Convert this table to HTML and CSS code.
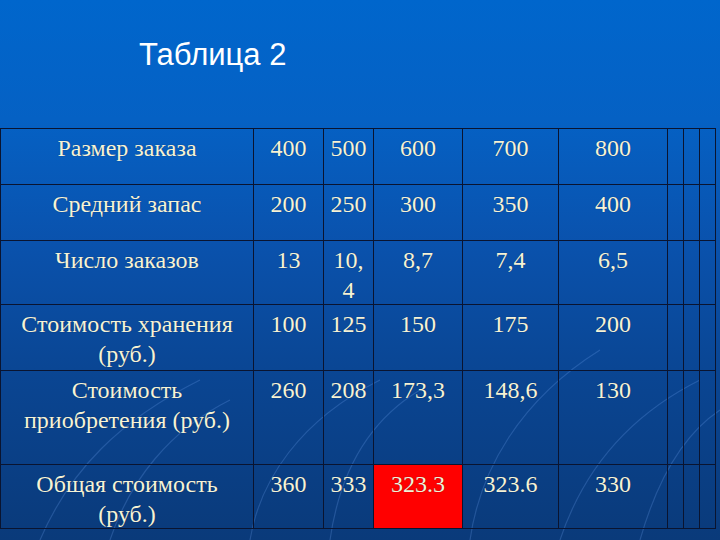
FILE: index.html
```html
<!DOCTYPE html>
<html lang="ru">
<head>
<meta charset="utf-8">
<title>Таблица 2</title>
<link rel="stylesheet" href="styles.css">
</head>
<body>
<div class="slide">
  <div class="header"><h1 class="title">Таблица 2</h1></div>
  <div class="grid">
    <div class="cell label">Размер заказа</div>
    <div class="cell">400</div><div class="cell">500</div><div class="cell">600</div><div class="cell">700</div><div class="cell">800</div>
    <div class="cell"></div><div class="cell"></div><div class="cell"></div>

    <div class="cell label">Средний запас</div>
    <div class="cell">200</div><div class="cell">250</div><div class="cell">300</div><div class="cell">350</div><div class="cell">400</div>
    <div class="cell"></div><div class="cell"></div><div class="cell"></div>

    <div class="cell label">Число заказов</div>
    <div class="cell">13</div><div class="cell">10,<br>4</div><div class="cell">8,7</div><div class="cell">7,4</div><div class="cell">6,5</div>
    <div class="cell"></div><div class="cell"></div><div class="cell"></div>

    <div class="cell label">Стоимость хранения<br>(руб.)</div>
    <div class="cell">100</div><div class="cell">125</div><div class="cell">150</div><div class="cell">175</div><div class="cell">200</div>
    <div class="cell"></div><div class="cell"></div><div class="cell"></div>

    <div class="cell label">Стоимость<br>приобретения (руб.)</div>
    <div class="cell">260</div><div class="cell">208</div><div class="cell">173,3</div><div class="cell">148,6</div><div class="cell">130</div>
    <div class="cell"></div><div class="cell"></div><div class="cell"></div>

    <div class="cell label">Общая стоимость<br>(руб.)</div>
    <div class="cell">360</div><div class="cell">333</div><div class="cell hot">323.3</div><div class="cell">323.6</div><div class="cell">330</div>
    <div class="cell"></div><div class="cell"></div><div class="cell"></div>
  </div>
</div>
</body>
</html>
```
FILE: styles.css
```css
html, body {
  margin: 0;
  padding: 0;
}
body {
  width: 720px;
  height: 540px;
  overflow: hidden;
  background-color: #0a3a7a;
  background-image:
    url("data:image/svg+xml;utf8,<svg xmlns='http://www.w3.org/2000/svg' width='720' height='540'><g fill='none' stroke='%2380b0ff' stroke-opacity='0.22' stroke-width='1.2'><path d='M40 540 C70 470 120 420 200 380'/><path d='M110 540 C130 480 170 430 230 400'/><path d='M250 540 C260 480 300 420 380 380'/><path d='M470 540 C480 470 520 400 600 350'/><path d='M560 540 C580 480 620 420 700 380'/><path d='M330 540 C340 470 370 420 420 390'/><path d='M640 540 C660 470 690 430 720 410'/></g></svg>"),
    linear-gradient(180deg, #0066cc 0%, #0561c4 22%, #0a52ad 45%, #0a4592 70%, #0a3a7a 100%);
}
.slide {
  width: 720px;
  height: 540px;
  display: flex;
  flex-direction: column;
}
.header {
  height: 128px;
  box-sizing: border-box;
  padding: 37px 0 0 139px;
}
.title {
  margin: 0;
  font-family: "Liberation Sans", Arial, sans-serif;
  font-weight: normal;
  font-size: 31px;
  line-height: 36px;
  color: #ffffff;
}
.grid {
  display: grid;
  grid-template-columns: 253px 70px 50px 89px 96px 109px 16px 16px 16px;
  grid-template-rows: 56px 56px 64px 66px 94px 64px;
  width: max-content;
  border-top: 1px solid #0a1430;
  border-left: 1px solid #0a1430;
}
.cell {
  border-right: 1px solid #0a1430;
  border-bottom: 1px solid #0a1430;
  font-family: "Liberation Serif", "Times New Roman", serif;
  font-size: 24px;
  line-height: 30px;
  color: #f6f3d6;
  text-align: center;
  padding-top: 4px;
  white-space: nowrap;
  text-shadow: 0 0 1px rgba(0, 20, 60, 0.6);
}
.hot {
  background: #ff0000;
}
```
